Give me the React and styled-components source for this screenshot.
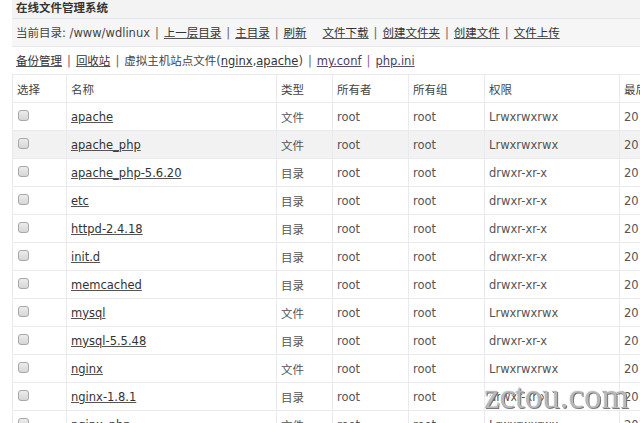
import React from 'react';
import styled, { createGlobalStyle } from 'styled-components';

const GlobalStyle = createGlobalStyle`
    html, body {
        margin: 0;
        padding: 0;
        background: #fff;
        overflow: hidden;
    }
    body {
        font-family: "DejaVu Sans", "Noto Sans CJK SC", sans-serif;
        font-size: 11.5px;
        color: #444;
    }
`;

const Page = styled.div`
    padding-left: 12px;
    width: 800px;
`;

const TitleBar = styled.div`
    height: 18px;
    line-height: 17px;
    padding-left: 4px;
    background: #f3f3f3;
    border-bottom: 1px solid #e3e6eb;
    font-weight: bold;
    color: #333;
`;

const Bar = styled.div`
    height: ${p => p.$h}px;
    line-height: ${p => p.$h + 1}px;
    padding-left: 4px;
    background: ${p => p.$bg || '#fff'};
    border-bottom: ${p => (p.$line ? '1px solid #e6e8ec' : 'none')};
    white-space: nowrap;
`;

const Link = styled.a`
    color: ${p => (p.$visited ? '#4a3d5c' : '#333')};
    text-decoration: underline;
    text-decoration-color: ${p => (p.$visited ? '#5a4a70' : '#555')};
    cursor: pointer;
    margin-left: ${p => p.$gap || 0}px;
`;

const Sep = styled.span`
    color: ${p => (p.$visited ? '#8a5a9a' : '#666')};
    padding: 0 5px;
`;

const Table = styled.table`
    border-collapse: collapse;
    table-layout: fixed;
    width: 767px;
`;

const Th = styled.th`
    box-sizing: border-box;
    width: ${p => p.$w}px;
    height: 28px;
    padding: 0 4px;
    text-align: left;
    font-weight: normal;
    color: #444;
    border: 1px solid #e8eaee;
    white-space: nowrap;
    overflow: hidden;
`;

const Tr = styled.tr`
    background: ${p => (p.$hl ? '#f2f2f2' : '#fff')};
`;

const Td = styled.td`
    box-sizing: border-box;
    height: 28px;
    padding: 0 4px;
    border: 1px solid #e8eaee;
    color: #555;
    white-space: nowrap;
    overflow: hidden;
`;

const Check = styled.input.attrs({ type: 'checkbox' })`
    appearance: none;
    display: block;
    width: 11px;
    height: 11px;
    margin: -3px 0 0 1px;
    border: 1px solid #a8a8a8;
    border-radius: 3px;
    background: linear-gradient(#ececec, #d6d6d6);
`;

const Watermark = styled.div`
    position: fixed;
    left: 484px;
    top: 377px;
    font-family: "Liberation Serif", serif;
    font-size: 35px;
    color: #b8b8b8;
    text-shadow: 1px 1px 0 #777, -1px -1px 0 #f4f4f4;
    pointer-events: none;
`;

const files = [
    ['apache', '文件', 'Lrwxrwxrwx', '2016-04-20 15:32:11'],
    ['apache_php', '文件', 'Lrwxrwxrwx', '2016-04-20 15:32:11'],
    ['apache_php-5.6.20', '目录', 'drwxr-xr-x', '2016-04-20 15:30:02'],
    ['etc', '目录', 'drwxr-xr-x', '2016-04-20 15:35:40'],
    ['httpd-2.4.18', '目录', 'drwxr-xr-x', '2016-04-20 15:28:17'],
    ['init.d', '目录', 'drwxr-xr-x', '2016-04-20 15:35:40'],
    ['memcached', '目录', 'drwxr-xr-x', '2016-04-20 15:36:05'],
    ['mysql', '文件', 'Lrwxrwxrwx', '2016-04-20 15:25:44'],
    ['mysql-5.5.48', '目录', 'drwxr-xr-x', '2016-04-20 15:25:44'],
    ['nginx', '文件', 'Lrwxrwxrwx', '2016-04-20 15:33:09'],
    ['nginx-1.8.1', '目录', 'drwxr-xr-x', '2016-04-20 15:33:09'],
    ['nginx_php', '文件', 'Lrwxrwxrwx', '2016-04-20 15:34:21'],
];

const cols = [
    ['选择', 54],
    ['名称', 210],
    ['类型', 56],
    ['所有者', 76],
    ['所有组', 76],
    ['权限', 135],
    ['最后修改时间', 160],
];

const App = () => (
    <>
        <GlobalStyle />
        <Page>
            <TitleBar>在线文件管理系统</TitleBar>
            <Bar $h={27} $bg="#f6f6f6" $line>
                当前目录: /www/wdlinux<Sep>|</Sep>
                <Link>上一层目录</Link><Sep>|</Sep>
                <Link>主目录</Link><Sep>|</Sep>
                <Link>刷新</Link>
                <Link $gap={16}>文件下载</Link><Sep>|</Sep>
                <Link>创建文件夹</Link><Sep>|</Sep>
                <Link>创建文件</Link><Sep>|</Sep>
                <Link>文件上传</Link>
            </Bar>
            <Bar $h={27}>
                <Link>备份管理</Link><Sep>|</Sep>
                <Link>回收站</Link><Sep>|</Sep>
                虚拟主机站点文件(<Link>nginx</Link>,<Link>apache</Link>)<Sep>|</Sep>
                <Link $visited>my.conf</Link><Sep $visited>|</Sep>
                <Link $visited>php.ini</Link>
            </Bar>
            <Table>
                <thead>
                    <tr>
                        {cols.map(([label, w]) => (
                            <Th key={label} $w={w}>{label}</Th>
                        ))}
                    </tr>
                </thead>
                <tbody>
                    {files.map(([name, type, perm, time], i) => (
                        <Tr key={name} $hl={i === 1}>
                            <Td><Check /></Td>
                            <Td><Link>{name}</Link></Td>
                            <Td>{type}</Td>
                            <Td>root</Td>
                            <Td>root</Td>
                            <Td>{perm}</Td>
                            <Td>{time}</Td>
                        </Tr>
                    ))}
                </tbody>
            </Table>
        </Page>
        <Watermark>zctou.com</Watermark>
    </>
);

export default App;
